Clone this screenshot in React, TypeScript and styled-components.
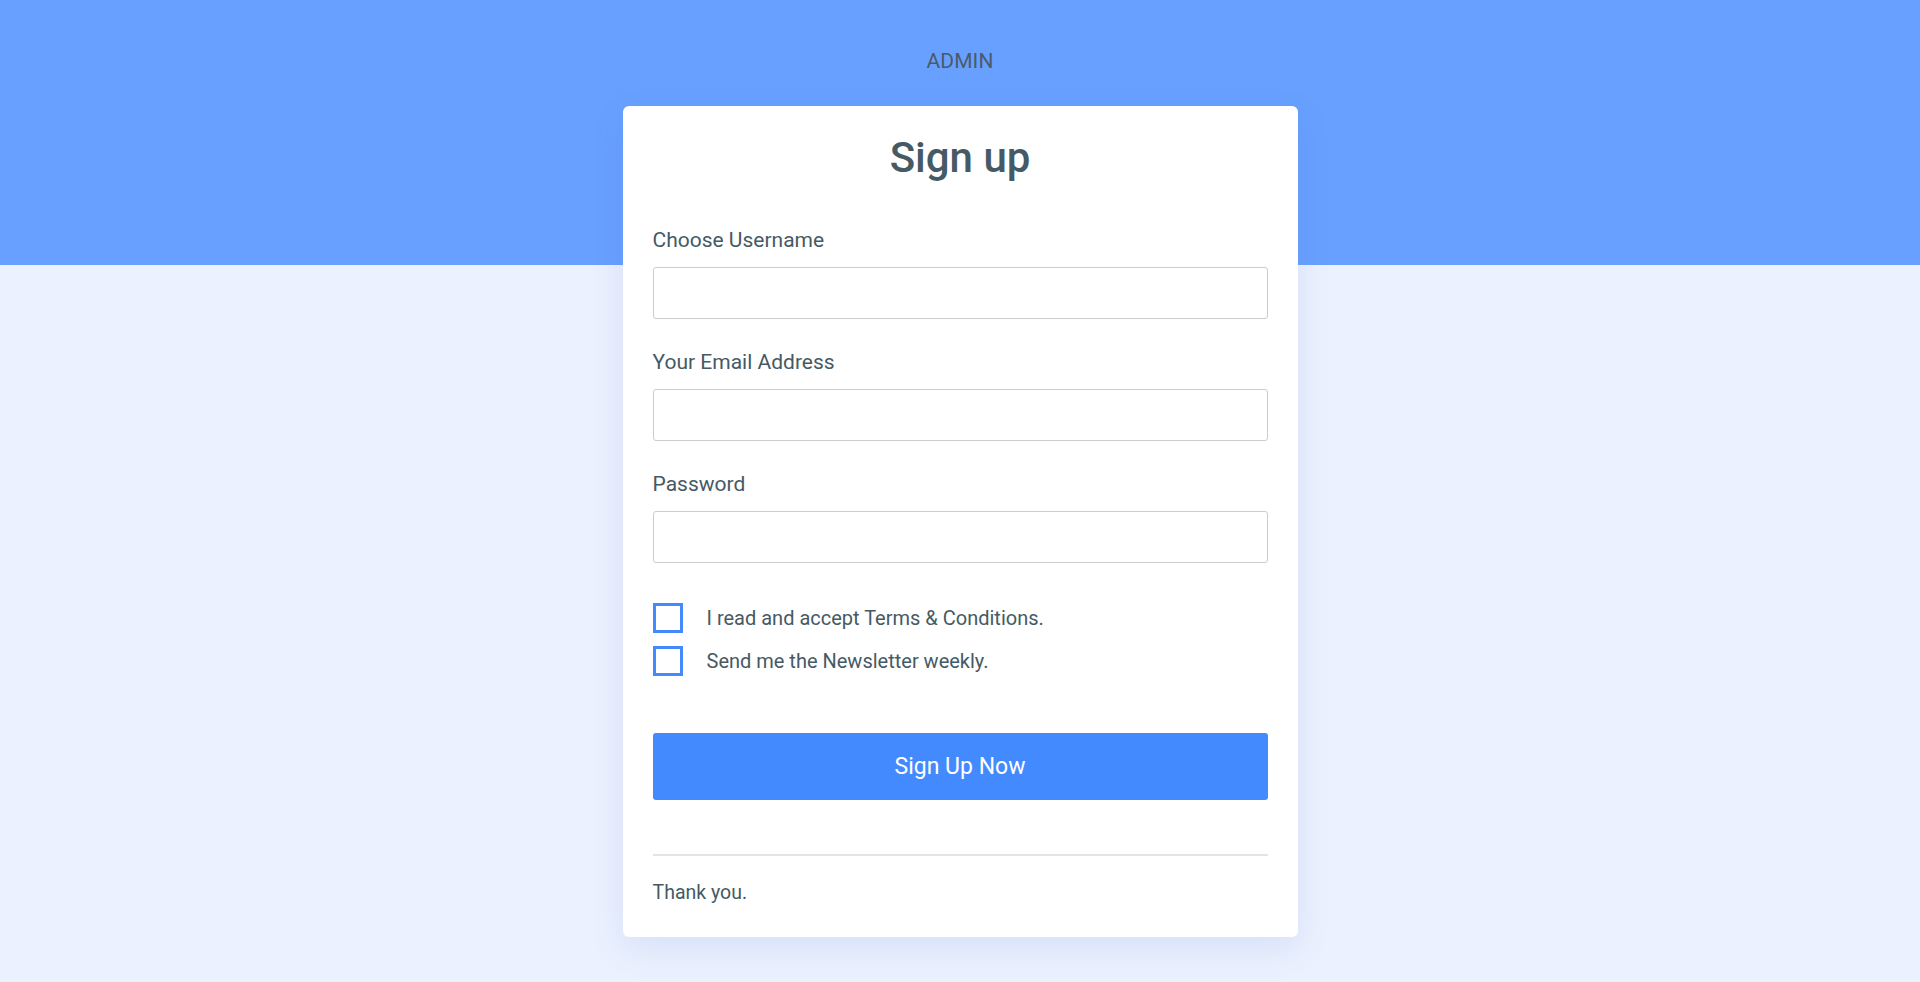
import React, { useState } from 'react'
import styled, { createGlobalStyle } from 'styled-components'

const GlobalStyle = createGlobalStyle`
  html, body {
    margin: 0;
    padding: 0;
  }
  body {
    background: #ebf1fe;
    font-family: Roboto, 'Liberation Sans', Arial, sans-serif;
    color: #455a64;
  }
  * {
    box-sizing: border-box;
  }
`

const Page = styled.div`
  min-height: 982px;
  display: flex;
  flex-direction: column;
  align-items: center;
  padding-top: 49px;
  background: linear-gradient(to bottom, #68a0ff 0, #68a0ff 265px, #ebf1fe 265px);
`

const Brand = styled.div`
  font-size: 21px;
  line-height: 24px;
  color: #4a5b69;
  letter-spacing: 0.1px;
`

const Card = styled.form`
  width: 675px;
  margin-top: 33px;
  padding: 27px 30px 32px;
  background: #ffffff;
  border-radius: 6px;
  box-shadow: 0 12px 34px rgba(70, 110, 200, 0.12);
`

const Title = styled.h1`
  margin: 0 0 45px;
  font-size: 42px;
  line-height: 50px;
  font-weight: 500;
  text-align: center;
  color: #455a64;
`

const Field = styled.div`
  display: flex;
  flex-direction: column;
  margin-bottom: 31px;
`

const Label = styled.label`
  font-size: 21px;
  line-height: 24px;
  margin-bottom: 15px;
  color: #455a64;
`

const Input = styled.input`
  height: 52px;
  width: 100%;
  border: 1px solid #cccccc;
  border-radius: 3px;
  padding: 0 14px;
  font-family: inherit;
  font-size: 20px;
  color: #455a64;
  outline: none;

  &:focus {
    border-color: #448aff;
  }
`

// sibling margins collapse with the last Field's 31px
const Checks = styled.div`
  display: flex;
  flex-direction: column;
  gap: 13px;
  margin-top: 40px;
`

const CheckRow = styled.label`
  display: flex;
  align-items: center;
  gap: 24px;
  height: 30px;
  font-size: 20px;
  line-height: 24px;
  color: #455a64;
  cursor: pointer;
`

const Box = styled.span<{ $checked: boolean }>`
  width: 30px;
  height: 30px;
  flex: none;
  border: 3px solid #448aff;
  background: ${(p) => (p.$checked ? '#448aff' : '#ffffff')};
  display: flex;
  align-items: center;
  justify-content: center;
`

const Submit = styled.button`
  display: block;
  width: 100%;
  height: 67px;
  margin-top: 57px;
  border: none;
  border-radius: 3px;
  background: #448aff;
  color: #ffffff;
  font-family: inherit;
  font-size: 23px;
  cursor: pointer;
`

const Divider = styled.hr`
  margin: 54px 0 25px;
  border: none;
  border-top: 2px solid #e4e4e4;
`

const Footnote = styled.p`
  margin: 0;
  font-size: 19.5px;
  line-height: 24px;
  color: #455a64;
`

const fields = [
  { id: 'username', label: 'Choose Username', type: 'text' },
  { id: 'email', label: 'Your Email Address', type: 'email' },
  { id: 'password', label: 'Password', type: 'password' },
]

const Checkbox = ({ label }: { label: string }) => {
  const [checked, setChecked] = useState(false)
  return (
    <CheckRow onClick={() => setChecked((c) => !c)}>
      <Box $checked={checked}>
        {checked && (
          <svg width="16" height="16" viewBox="0 0 16 16">
            <path d="M3 8.5l3 3 7-7" fill="none" stroke="#fff" strokeWidth="2.4" />
          </svg>
        )}
      </Box>
      {label}
    </CheckRow>
  )
}

const App = () => {
  return (
    <>
      <GlobalStyle />
      <Page>
        <Brand>ADMIN</Brand>
        <Card onSubmit={(e) => e.preventDefault()}>
          <Title>Sign up</Title>
          {fields.map((f) => (
            <Field key={f.id}>
              <Label htmlFor={f.id}>{f.label}</Label>
              <Input id={f.id} type={f.type} />
            </Field>
          ))}
          <Checks>
            <Checkbox label="I read and accept Terms & Conditions." />
            <Checkbox label="Send me the Newsletter weekly." />
          </Checks>
          <Submit type="submit">Sign Up Now</Submit>
          <Divider />
          <Footnote>Thank you.</Footnote>
        </Card>
      </Page>
    </>
  )
}

export default App
